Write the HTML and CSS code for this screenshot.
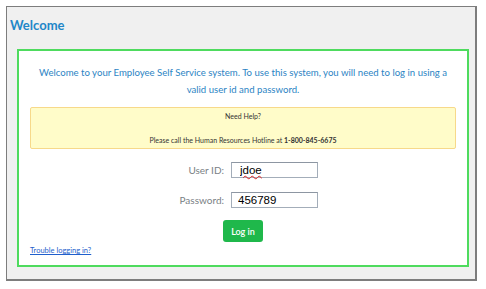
FILE: index.html
```html
<!DOCTYPE html>
<html lang="en">
<head>
  <meta charset="UTF-8">
  <title>Welcome</title>
  <link rel="stylesheet" href="styles.css">
</head>
<body>
  <div class="ess-frame">
    <h2 class="ess-title">Welcome</h2>
    <div class="login-box">
      <p class="login-intro">Welcome to your Employee Self Service system. To use this system, you will need to log in using a<br>valid user id and password.</p>
      <div class="help-box">
        <div class="help-line">Need Help?</div>
        <div class="help-line help-gap">Please call the Human Resources Hotline at <b>1-800-845-6675</b></div>
      </div>
      <form class="login-form" onsubmit="return false">
        <div class="login-fields">
          <label class="login-label" for="user-id">User ID:</label>
          <div class="login-field">
            <input class="login-input login-spell" id="user-id" type="text" value="jdoe" spellcheck="true">
            <span class="spell-mark">jdoe</span>
          </div>
          <label class="login-label" for="user-pass">Password:</label>
          <div class="login-field">
            <input class="login-input" id="user-pass" type="text" value="456789">
          </div>
        </div>
        <div class="login-actions">
          <button class="login-button" type="submit">Log in</button>
        </div>
      </form>
      <a class="trouble-link" href="#">Trouble logging in?</a>
    </div>
  </div>
</body>
</html>
```

FILE: styles.css
```css
/* ESS login */
:root {
  --ess-blue: #1f87c8;
  --ess-green: #4edb5e;
  --ess-button: #1fb84b;
  --ess-gray: #7a7f85;
}

body {
  margin: 0;
  background: #fff;
  font-family: Lato, "Open Sans", sans-serif;
}

.ess-frame {
  margin: 6px 0 0 6px;
  width: 471px;
  height: 275px;
  box-sizing: border-box;
  background: #f0f0f0;
  border-style: solid;
  border-color: #7d7d7d;
  border-width: 1px 2px 2px 1px;
  padding: 0 6px 0 10px;
}

.ess-title {
  margin: 10px 0 16px -7px;
  font-size: 13px;
  line-height: 16px;
  font-weight: 700;
  color: var(--ess-blue);
}

.login-box {
  height: 218px;
  box-sizing: border-box;
  background: #fff;
  border: 2px solid var(--ess-green);
  padding: 13px 11px 0;
}

.login-intro {
  margin: 0;
  text-align: center;
  font-size: 9.6px;
  line-height: 17px;
  color: #2c84c4;
}

.help-box {
  margin-top: 9px;
  height: 42px;
  box-sizing: border-box;
  background: #fffcc9;
  border: 1px solid #f7d98a;
  border-radius: 2px;
  padding-top: 3px;
  text-align: center;
  font-size: 7px;
  line-height: 10px;
  color: #333;
}

.help-gap {
  margin-top: 14px;
}

.login-form {
  margin-top: 13px;
}

.login-fields {
  margin-left: -11px;
  display: grid;
  grid-template-columns: 205px 87px;
  column-gap: 7px;
  row-gap: 14px;
  align-items: center;
}

.login-label {
  text-align: right;
  font-size: 10px;
  color: var(--ess-gray);
}

.login-field {
  position: relative;
  height: 16px;
}

.login-input {
  box-sizing: border-box;
  width: 87px;
  height: 16px;
  margin: 0;
  padding: 0 0 0 6px;
  border: 1px solid #a3adb9;
  border-top-color: #8d96a2;
  font-family: "Liberation Sans", Arial, sans-serif;
  font-size: 11.5px;
  color: #000;
  background: #fff;
  display: block;
}

.login-spell {
  padding-left: 8px;
}

.spell-mark {
  position: absolute;
  left: 9px;
  top: 1px;
  font-family: "Liberation Sans", Arial, sans-serif;
  font-size: 11.5px;
  line-height: 14px;
  color: transparent;
  text-decoration: underline wavy #d22;
  text-decoration-thickness: 1px;
  text-underline-offset: 1px;
  pointer-events: none;
}

.login-actions {
  margin-top: 12px;
  display: flex;
  justify-content: center;
}

.login-button {
  width: 40px;
  height: 22px;
  padding: 0;
  border: 0;
  border-radius: 3px;
  background: var(--ess-button);
  color: #fff;
  font-family: Lato, sans-serif;
  font-size: 9px;
  font-weight: 600;
  cursor: pointer;
}

.trouble-link {
  display: block;
  margin-top: 4px;
  font-size: 7.5px;
  line-height: 10px;
  color: #1f5fcc;
  text-decoration: underline;
}
```
